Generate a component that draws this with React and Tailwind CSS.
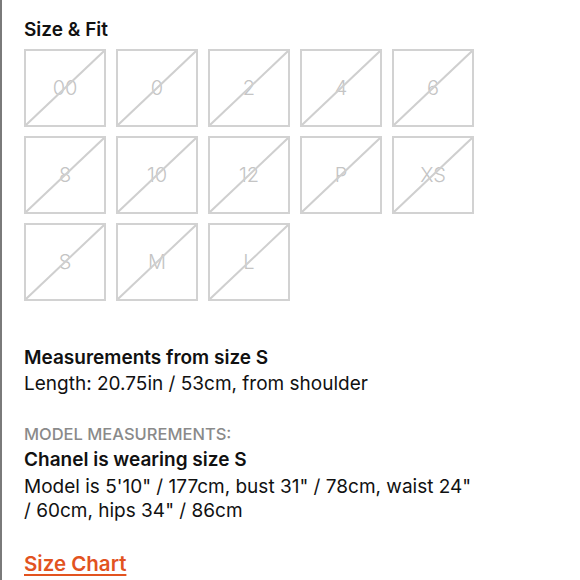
const SIZES = ['00', '0', '2', '4', '6', '8', '10', '12', 'P', 'XS', 'S', 'M', 'L'];

function SizeBox({ label }) {
  return (
    <div className="relative h-[78px] w-[82px] border-2 border-[#d2d2d2]">
      <svg className="absolute inset-0 h-full w-full" viewBox="0 0 100 100" preserveAspectRatio="none">
        <line x1="0" y1="100" x2="100" y2="0" stroke="#cfcfcf" strokeWidth="2" vectorEffect="non-scaling-stroke" />
      </svg>
      <div className="flex h-full items-center justify-center text-[20px] font-light text-[#c4c4c4]">{label}</div>
    </div>
  );
}

export default function App() {
  return (
    <div
      className="min-h-[580px] w-[580px] border-l-2 border-[#7a7a7a] bg-white pl-[22px] pt-[18px] text-[#111]"
      style={{ fontFamily: 'Inter, "Noto Sans", sans-serif' }}
    >
      <h2 className="text-[19px] font-semibold leading-[24px]">Size &amp; Fit</h2>
      <div className="mt-[7px] grid grid-cols-[repeat(5,82px)] gap-x-[10px] gap-y-[9px]">
        {SIZES.map((s) => (
          <SizeBox key={s} label={s} />
        ))}
      </div>

      <div className="mt-[44px] text-[19px] leading-[26px]">
        <p className="font-semibold">Measurements from size S</p>
        <p>Length: 20.75in / 53cm, from shoulder</p>
      </div>

      <div className="mt-[24px] text-[19px]">
        <p className="text-[16.5px] font-medium leading-[26px] text-[#8a8a8a]">MODEL MEASUREMENTS:</p>
        <p className="font-semibold leading-[26px]">Chanel is wearing size S</p>
        <p className="mt-[2px] leading-[24px]">
          Model is 5'10" / 177cm, bust 31" / 78cm, waist 24"
          <br />/ 60cm, hips 34" / 86cm
        </p>
      </div>

      <a href="#" className="mt-[26px] inline-block text-[20.5px] font-semibold text-[#e2531f] underline underline-offset-[3px]">
        Size Chart
      </a>
    </div>
  );
}
